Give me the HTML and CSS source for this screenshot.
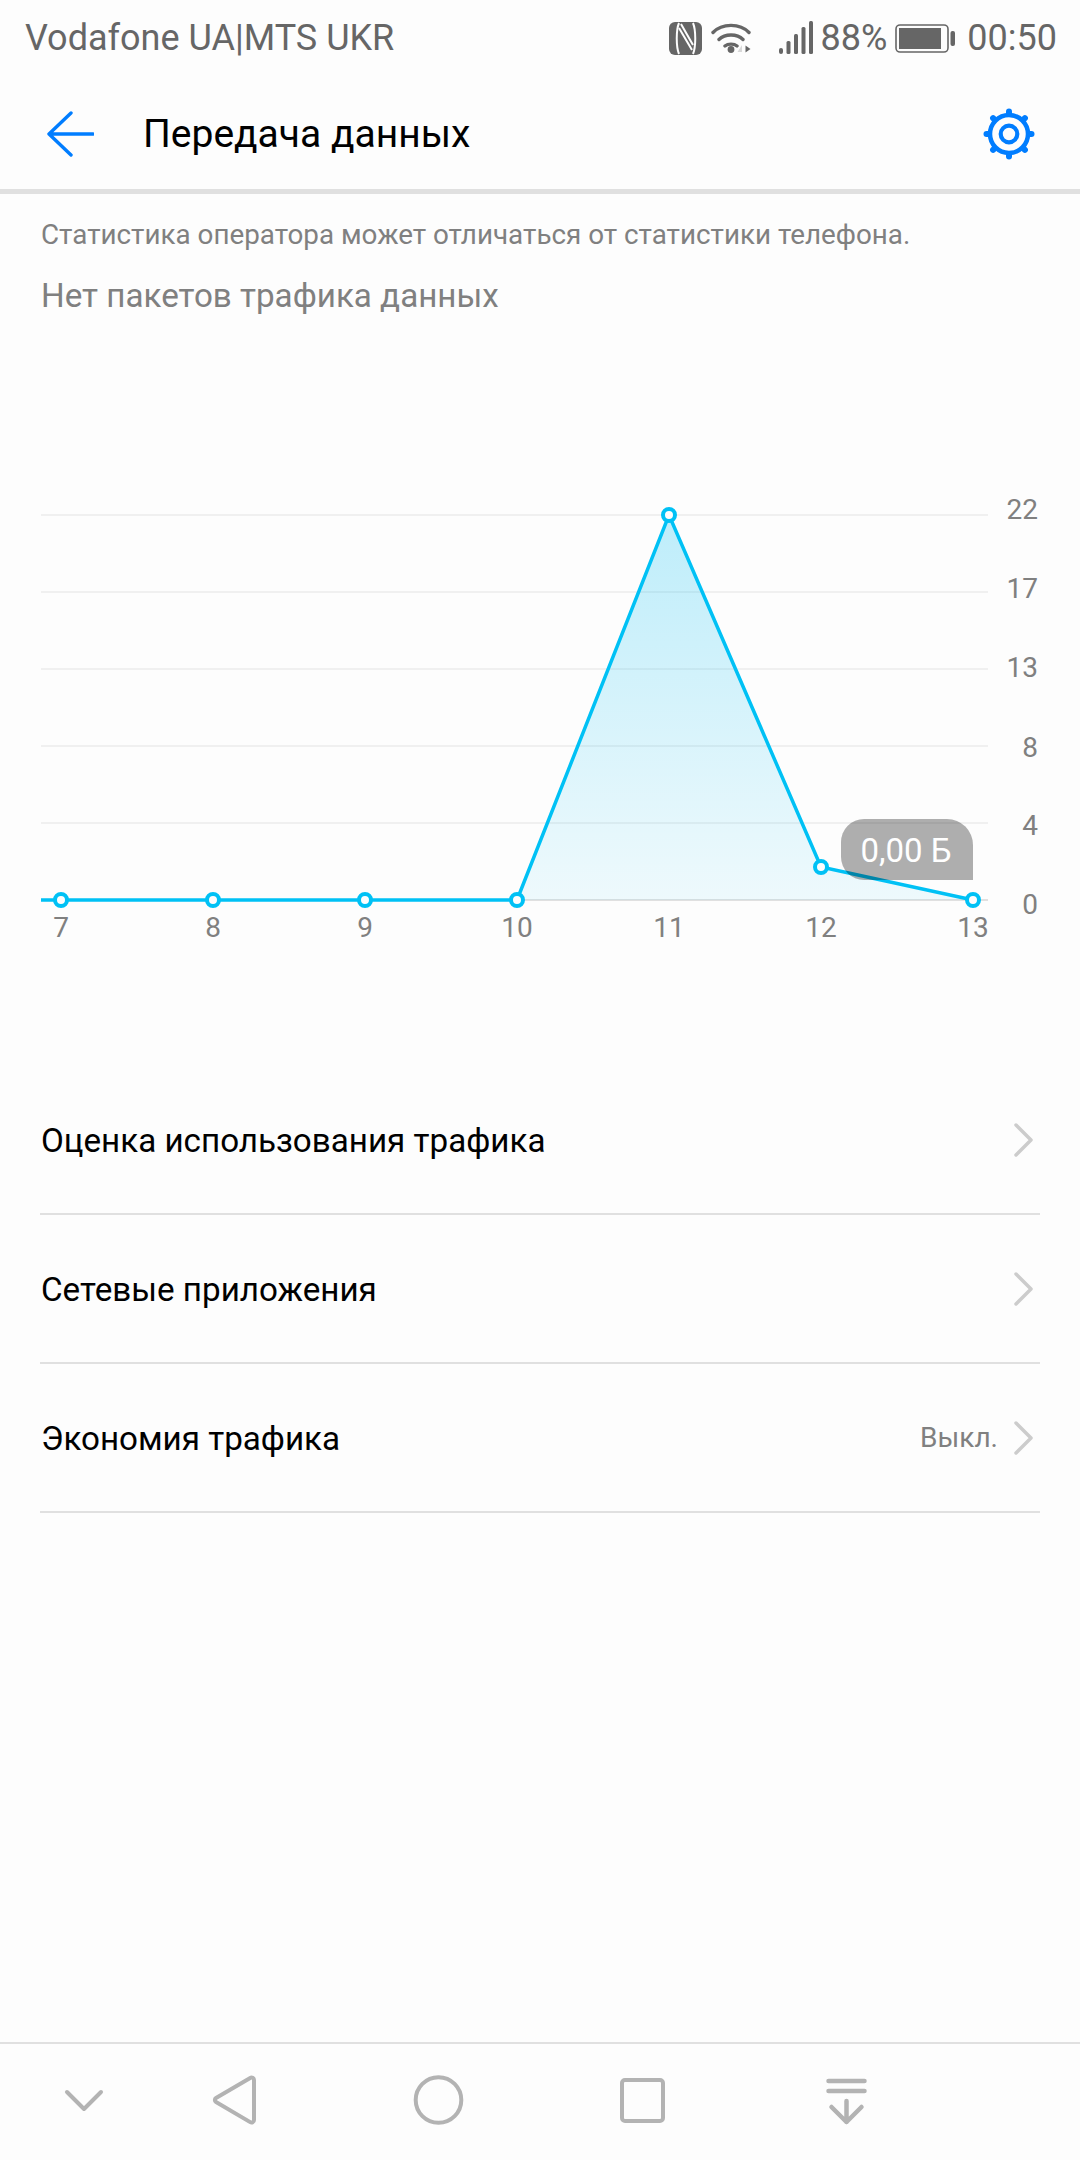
FILE: index.html
```html
<!DOCTYPE html>
<html>
<head>
    <meta charset="UTF-8">
    <meta name="viewport" content="width=device-width, initial-scale=1.0">
    <title>Передача данных</title>
    <link rel="stylesheet" href="styles.css">
</head>
<body>
    <div class="screen">
        <div class="status-bar">
            <span class="carrier">Vodafone UA|MTS UKR</span>
            <div class="status-icons">
                <svg class="ic-nfc" width="33" height="33" viewBox="0 0 33 33">
                    <rect width="33" height="33" rx="6" fill="#666"/>
                    <path d="M10 1C7 8 7 25 10 32M24 1C27 8 27 25 24 32" stroke="#fdfdfd" stroke-width="2" fill="none"/>
                    <path d="M10 6L23 28M12 2L24 23" stroke="#fdfdfd" stroke-width="2" fill="none"/>
                </svg>
                <svg class="ic-wifi" width="41" height="34" viewBox="0 0 41 34">
                    <path d="M2 11.500C11 2 29 2 38 11.500M8 18.500C14 12.500 26 12.500 32 18.500M14 25C17 22.500 23 22.500 26 25" stroke="#666" stroke-width="3.400" fill="none" stroke-linecap="round"/>
                    <circle cx="20" cy="28.500" r="3.400" fill="#666"/>
                    <path d="M31 31h-4.500l4.500-7z" fill="#d8d8d8"/>
                    <path d="M34.500 24.500v7l5-3.500z" fill="#666"/>
                </svg>
                <svg class="ic-signal" width="35" height="34" viewBox="0 0 35 34">
                    <rect x="0" y="27" width="4" height="6" rx="2" fill="#666"/>
                    <rect x="7.500" y="20" width="4" height="13" rx="1.500" fill="#666"/>
                    <rect x="15" y="13" width="4" height="20" rx="1.500" fill="#666"/>
                    <rect x="22.500" y="6" width="4" height="27" rx="1.500" fill="#666"/>
                    <rect x="30" y="0" width="4" height="33" rx="1.500" fill="#666"/>
                </svg>
                <span class="battery-pct">88%</span>
                <svg class="ic-battery" width="60" height="29" viewBox="0 0 60 29">
                    <rect x="1" y="1" width="52" height="27" rx="4" fill="none" stroke="#666" stroke-width="1.600"/>
                    <rect x="4" y="4" width="42" height="21" fill="#666"/>
                    <rect x="55.500" y="7" width="4.500" height="15" rx="2" fill="#666"/>
                </svg>
                <span class="clock">00:50</span>
            </div>
        </div>

        <div class="toolbar">
            <svg class="back" width="48" height="46" viewBox="0 0 48 46">
                <path d="M47 23H3M25 2L3 23l22 21" stroke="#007dff" stroke-width="3.400" fill="none" stroke-linecap="round" stroke-linejoin="round"/>
            </svg>
            <span class="title">Передача данных</span>
            <svg class="gear" width="52" height="52" viewBox="0 0 52 52">
                <g stroke="#007dff" stroke-width="6" stroke-linecap="round">
                    <path d="M26 3.500V8"/>
                    <path d="M26 3.500V8" transform="rotate(45 26 26)"/>
                    <path d="M26 3.500V8" transform="rotate(90 26 26)"/>
                    <path d="M26 3.500V8" transform="rotate(135 26 26)"/>
                    <path d="M26 3.500V8" transform="rotate(180 26 26)"/>
                    <path d="M26 3.500V8" transform="rotate(225 26 26)"/>
                    <path d="M26 3.500V8" transform="rotate(270 26 26)"/>
                    <path d="M26 3.500V8" transform="rotate(315 26 26)"/>
                </g>
                <circle cx="26" cy="26" r="19" fill="#fdfdfd" stroke="#007dff" stroke-width="4.500"/>
                <circle cx="26" cy="26" r="8.300" fill="none" stroke="#007dff" stroke-width="4.200"/>
            </svg>
        </div>

        <div class="content">
            <p class="note">Статистика оператора может отличаться от статистики телефона.</p>
            <p class="no-packs">Нет пакетов трафика данных</p>

            <svg class="chart" width="1080" height="460" viewBox="0 490 1080 460">
                <defs>
                    <linearGradient id="area" x1="0" y1="515" x2="0" y2="900" gradientUnits="userSpaceOnUse">
                        <stop offset="0" stop-color="#00bdf2" stop-opacity="0.25"/>
                        <stop offset="1" stop-color="#00bdf2" stop-opacity="0.06"/>
                    </linearGradient>
                </defs>
                <g stroke="#f0f0f0" stroke-width="2">
                    <path d="M41 515H988M41 592H988M41 669H988M41 746H988M41 823H988"/>
                </g>
                <path d="M41 900H988" stroke="#e0e0e0" stroke-width="2"/>
                <path d="M517 900L669 515L821 867L973 900Z" fill="url(#area)"/>
                <path d="M41 900H517L669 515L821 867L973 900" fill="none" stroke="#00c1f5" stroke-width="3.500"/>
                <g fill="#fdfdfd" stroke="#00c1f5" stroke-width="4">
                    <circle cx="61" cy="900" r="6"/>
                    <circle cx="213" cy="900" r="6"/>
                    <circle cx="365" cy="900" r="6"/>
                    <circle cx="517" cy="900" r="6"/>
                    <circle cx="669" cy="515" r="6"/>
                    <circle cx="821" cy="867" r="6"/>
                    <circle cx="973" cy="900" r="6"/>
                </g>
                <path d="M864 819H947a26 26 0 0 1 26 26V880H864a23 23 0 0 1-23-23V842a23 23 0 0 1 23-23Z" fill="rgba(0,0,0,0.31)"/>
                <text class="tip-text" x="906" y="862" text-anchor="middle">0,00 Б</text>
                <g class="axis-y" text-anchor="end">
                    <text x="1038" y="519">22</text>
                    <text x="1038" y="598">17</text>
                    <text x="1038" y="677">13</text>
                    <text x="1038" y="757">8</text>
                    <text x="1038" y="835">4</text>
                    <text x="1038" y="914">0</text>
                </g>
                <g class="axis-x" text-anchor="middle">
                    <text x="61" y="937">7</text>
                    <text x="213" y="937">8</text>
                    <text x="365" y="937">9</text>
                    <text x="517" y="937">10</text>
                    <text x="669" y="937">11</text>
                    <text x="821" y="937">12</text>
                    <text x="973" y="937">13</text>
                </g>
            </svg>

            <div class="menu">
                <div class="menu-row">
                    <span class="row-label">Оценка использования трафика</span>
                    <svg class="chevron" width="20" height="34" viewBox="0 0 20 34"><path d="M2 2l15 15L2 32" stroke="#ccc" stroke-width="3.500" fill="none" stroke-linecap="round" stroke-linejoin="round"/></svg>
                </div>
                <div class="menu-row">
                    <span class="row-label">Сетевые приложения</span>
                    <svg class="chevron" width="20" height="34" viewBox="0 0 20 34"><path d="M2 2l15 15L2 32" stroke="#ccc" stroke-width="3.500" fill="none" stroke-linecap="round" stroke-linejoin="round"/></svg>
                </div>
                <div class="menu-row">
                    <span class="row-label">Экономия трафика</span>
                    <span class="row-value">Выкл.</span>
                    <svg class="chevron" width="20" height="34" viewBox="0 0 20 34"><path d="M2 2l15 15L2 32" stroke="#ccc" stroke-width="3.500" fill="none" stroke-linecap="round" stroke-linejoin="round"/></svg>
                </div>
            </div>
        </div>

        <div class="nav-bar">
            <svg class="nav-btn nav-hide" width="90" height="60" viewBox="0 0 90 60"><path d="M28 22l17 17 17-17" stroke="#b3b3b3" stroke-width="4" fill="none" stroke-linecap="round" stroke-linejoin="round"/></svg>
            <svg class="nav-btn" width="90" height="60" viewBox="0 0 90 60"><path d="M65 10v40a2.500 2.500 0 0 1-3.800 2.100L27 32.100a2.500 2.500 0 0 1 0-4.200L61.200 7.900A2.500 2.500 0 0 1 65 10Z" stroke="#b3b3b3" stroke-width="4" fill="none" stroke-linejoin="round"/></svg>
            <svg class="nav-btn" width="90" height="60" viewBox="0 0 90 60"><circle cx="45.500" cy="30" r="22.800" stroke="#b3b3b3" stroke-width="4" fill="none"/></svg>
            <svg class="nav-btn" width="90" height="60" viewBox="0 0 90 60"><rect x="24" y="10" width="41" height="41" rx="3" stroke="#b3b3b3" stroke-width="4" fill="none"/></svg>
            <svg class="nav-btn" width="90" height="60" viewBox="0 0 90 60">
                <path d="M26.500 11H62.500M26.500 21H62.500M44.500 31V52M29.500 37l15 15 15-15" stroke="#b3b3b3" stroke-width="4.500" fill="none" stroke-linecap="round" stroke-linejoin="round"/>
            </svg>
        </div>
    </div>
</body>
</html>
```

FILE: styles.css
```css
body {
    margin: 0;
    background-color: #fdfdfd;
    font-family: Roboto, "Noto Sans", sans-serif;
}
.screen {
    width: 1080px;
    height: 2160px;
    display: flex;
    flex-direction: column;
    overflow: hidden;
}
.status-bar {
    height: 76px;
    display: flex;
    align-items: center;
    justify-content: space-between;
    padding: 0 23px 0 25px;
    color: #666;
    font-size: 36px;
}
.status-icons {
    display: flex;
    align-items: center;
}
.ic-wifi {
    margin-left: 9px;
}
.ic-signal {
    margin-left: 27px;
}
.battery-pct {
    margin-left: 7px;
}
.ic-battery {
    margin-left: 8px;
}
.clock {
    margin-left: 12px;
}
.toolbar {
    height: 111px;
    display: flex;
    align-items: center;
    padding: 2px 45px 0 46px;
    border-bottom: 5px solid #e0e0e0;
}
.title {
    margin-left: 49px;
    flex: 1;
    font-size: 39px;
    color: #000;
}
.content {
    flex: 1;
    display: flex;
    flex-direction: column;
}
.note {
    margin: 23px 0 0 41px;
    font-size: 27.8px;
    line-height: 36px;
    color: #808080;
}
.no-packs {
    margin: 24px 0 0 41px;
    font-size: 33.2px;
    line-height: 38px;
    color: #808080;
}
.chart {
    display: block;
    margin-top: 175px;
}
.tip-text {
    font-size: 33px;
    fill: #fff;
}
.axis-y text,
.axis-x text {
    font-size: 28px;
    fill: #808080;
}
.menu {
    margin: 116px 40px 0 40px;
}
.menu-row {
    height: 147px;
    display: flex;
    align-items: center;
    border-bottom: 2px solid #e0e0e0;
}
.row-label {
    flex: 1;
    padding-left: 1px;
    padding-top: 2px;
    font-size: 33.2px;
    color: #000;
}
.row-value {
    font-size: 28px;
    color: #808080;
    margin-right: 16px;
}
.chevron {
    margin-right: 6px;
}
.nav-bar {
    height: 118px;
    box-sizing: border-box;
    border-top: 2px solid #e0e0e0;
    display: flex;
    align-items: center;
    padding: 0 0 4px 39px;
    gap: 114.5px;
}
.nav-hide {
    margin-right: -55px;
}
```
